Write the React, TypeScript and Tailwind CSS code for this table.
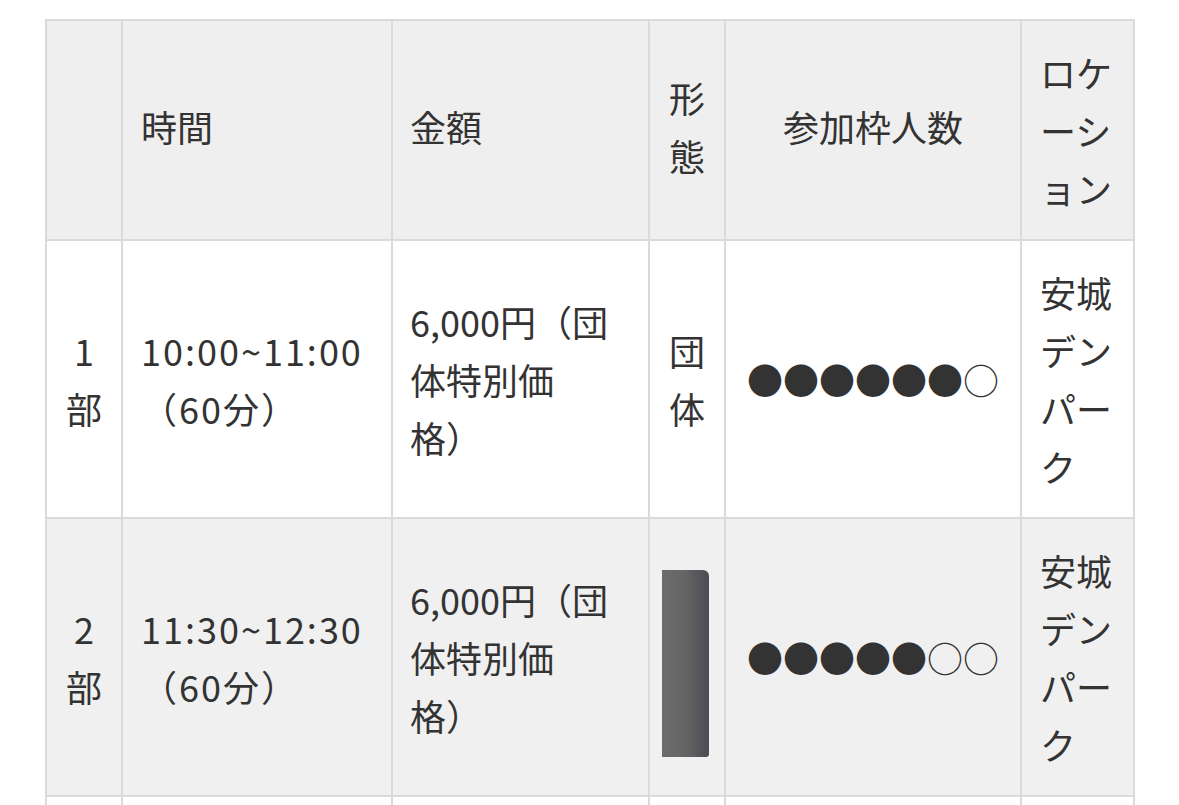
import React from "react";

const cell = "border-2 border-[#dadada] py-[22px] align-middle leading-[58px]";

const Slot = (props: {
  num: string;
  time: string;
  price: string;
  kind: React.ReactNode;
  dots: string;
  bg: string;
}) => {
  return (
    <tr className={props.bg}>
      <td className={cell + " px-[10px] text-center"}>
        {props.num}
        <br />部
      </td>
      <td className={cell + " pl-[18px] pr-[10px] tracking-[2px]"}>
        {props.time}
        <br />（60分）
      </td>
      <td className={cell + " pl-[17px] pr-[33px]"}>{props.price}</td>
      <td className={cell + " px-[10px] text-center"}>{props.kind}</td>
      <td className={cell + " px-[10px] text-center whitespace-nowrap"}>
        {props.dots}
      </td>
      <td className={cell + " pl-[18px] pr-[16px]"}>安城デンパーク</td>
    </tr>
  );
};

const App = () => {
  return (
    <div className="h-[805px] overflow-hidden bg-white pt-[19px] pl-[45px]">
      <table
        className="w-[1088px] table-fixed border-collapse text-[36px] text-[#333333] [text-spacing-trim:space-all]"
        style={{ fontFamily: '"Noto Sans CJK JP", "Noto Sans", sans-serif' }}
      >
        <colgroup>
          <col className="w-[76px]" />
          <col className="w-[270px]" />
          <col className="w-[257px]" />
          <col className="w-[76px]" />
          <col className="w-[296px]" />
          <col className="w-[113px]" />
        </colgroup>
        <thead>
          <tr className="bg-[#efefef]">
            <th className={cell + " px-[10px] font-normal"}></th>
            <th className={cell + " pl-[18px] pr-[10px] font-normal text-left"}>
              <span className="relative -top-[4px]">時間</span>
            </th>
            <th className={cell + " pl-[17px] pr-[33px] font-normal text-left"}>
              <span className="relative -top-[4px]">金額</span>
            </th>
            <th className={cell + " px-[10px] font-normal text-center"}>
              <span className="relative -top-[4px]">形態</span>
            </th>
            <th className={cell + " px-[10px] font-normal text-center"}>
              <span className="relative -top-[4px]">参加枠人数</span>
            </th>
            <th className={cell + " pl-[18px] pr-[16px] font-normal text-left"}>
              ロケーション
            </th>
          </tr>
        </thead>
        <tbody>
          <Slot
            num="1"
            time="10:00~11:00"
            price="6,000円（団体特別価格）"
            kind="団体"
            dots="●●●●●●○"
            bg="bg-white"
          />
          <Slot
            num="2"
            time="11:30~12:30"
            price="6,000円（団体特別価格）"
            kind={
              <div className="ml-[2px] mt-[12px] h-[187px] w-[47px] rounded-tr-[6px] rounded-br-[3px] bg-gradient-to-r from-[#6c6c6c] via-[#656565] to-[#4a4a54]" />
            }
            dots="●●●●●○○"
            bg="bg-[#f0f0f0]"
          />
          {/* next row continues below the fold */}
          <tr className="h-[200px] bg-white">
            <td className={cell}></td>
            <td className={cell}></td>
            <td className={cell}></td>
            <td className={cell}></td>
            <td className={cell}></td>
            <td className={cell}></td>
          </tr>
        </tbody>
      </table>
    </div>
  );
};

export default App;
